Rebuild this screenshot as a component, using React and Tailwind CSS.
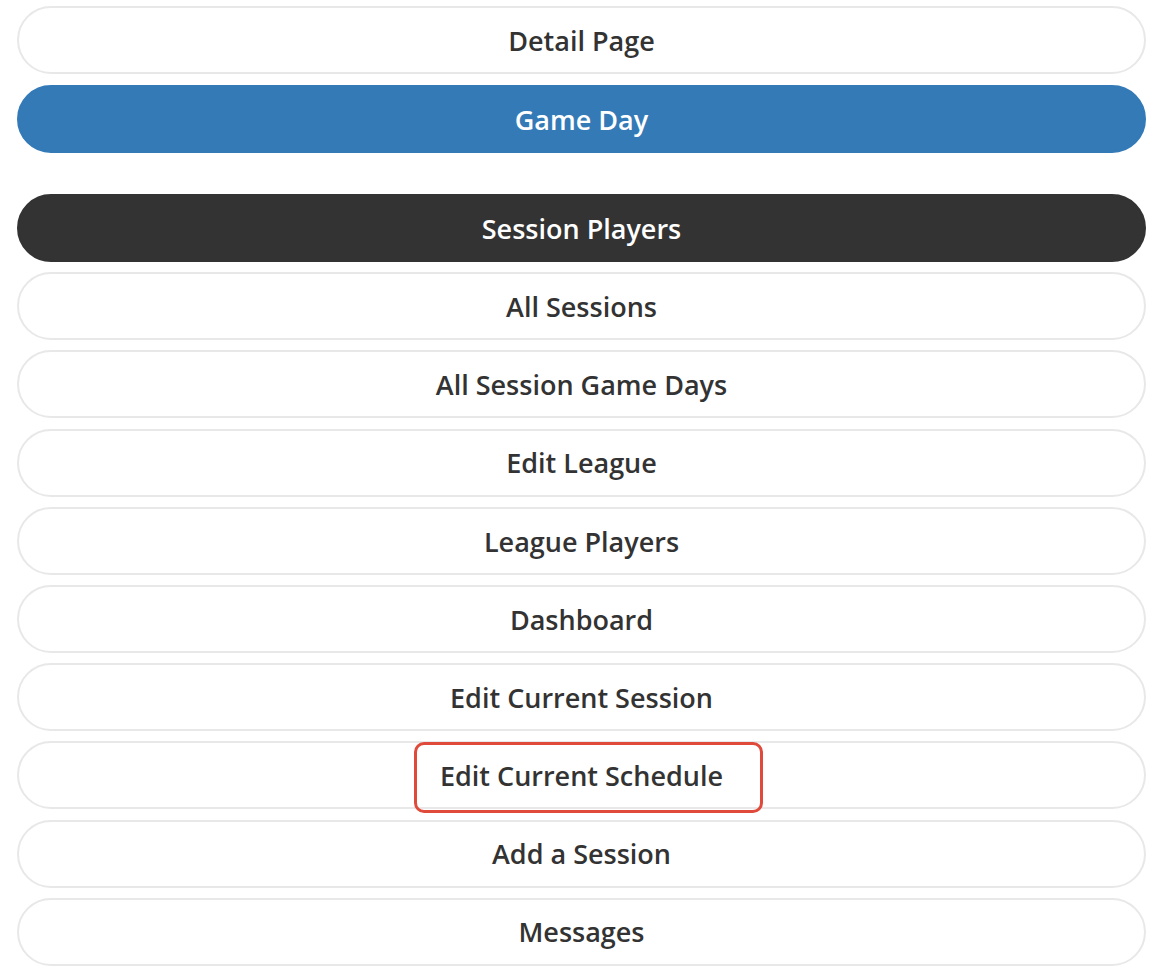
const links = [
  "All Sessions",
  "All Session Game Days",
  "Edit League",
  "League Players",
  "Dashboard",
  "Edit Current Session",
  "Edit Current Schedule",
  "Add a Session",
  "Messages",
];

function NavButton({ label, variant = "default", highlight = false }) {
  const styles = {
    default: "bg-white text-[#333333] border-[#e8e8e8]",
    primary: "bg-[#337ab7] text-white border-[#337ab7]",
    dark: "bg-[#333333] text-white border-[#333333]",
  };
  return (
    <div
      className={`relative flex h-[68px] w-full items-center justify-center rounded-full border-2 pt-[2px] text-[27px] font-semibold ${styles[variant]}`}
    >
      <span>{label}</span>
      {highlight && (
        <div className="pointer-events-none absolute left-[395px] top-[-1px] h-[71px] w-[349px] rounded-[10px] border-[3px] border-[#e04a3a]" />
      )}
    </div>
  );
}

export default function App() {
  return (
    <div
      className="min-h-[970px] w-full bg-white pl-[17px] pr-[5px] pt-[6px]"
      style={{ fontFamily: '"Open Sans", "Noto Sans", sans-serif' }}
    >
      <div className="flex flex-col gap-[11px]">
        <NavButton label="Detail Page" />
        <NavButton label="Game Day" variant="primary" />
      </div>

      <div className="mt-[41px] flex flex-col gap-[10.2px]">
        <NavButton label="Session Players" variant="dark" />
        {links.map((l) => (
          <NavButton key={l} label={l} highlight={l === "Edit Current Schedule"} />
        ))}
      </div>
    </div>
  );
}
